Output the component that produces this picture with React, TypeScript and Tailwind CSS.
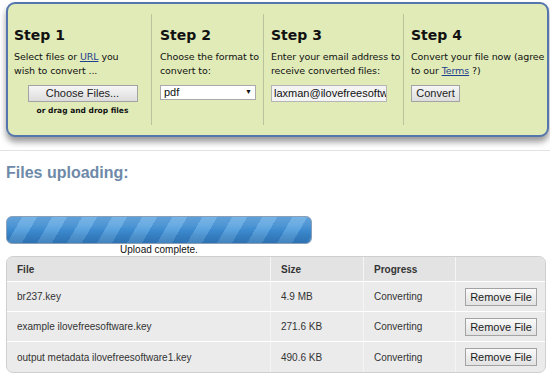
import React from 'react';

function StepDivider() {
  return <div className="w-px self-stretch bg-[#b9c39c] my-[10px]" />;
}

const files = [
  { name: 'br237.key', size: '4.9 MB' },
  { name: 'example ilovefreesoftware.key', size: '271.6 KB' },
  { name: 'output metadata ilovefreesoftware1.key', size: '490.6 KB' },
];

const verdana = { fontFamily: '"DejaVu Sans", Verdana, sans-serif' };
const arial = { fontFamily: '"Liberation Sans", Arial, sans-serif' };

export default function App() {
  return (
    <div className="w-[550px] h-[376px] bg-white overflow-hidden relative" style={arial}>
      {/* Steps panel */}
      <div className="ml-[6px] mt-[2px] w-[543px] h-[135px] bg-[#e0ebb8] border-2 border-[#5576ad] rounded-[9px] shadow-[0_5px_6px_rgba(0,0,0,0.4)] flex text-[#111]">
        <div className="w-[143px] pl-[6px] pt-[22px]" style={verdana}>
          <h2 className="text-[14px] font-bold leading-[18px]">Step 1</h2>
          <p className="mt-[6px] w-[118px] text-[9.5px] leading-[14px] tracking-[-0.1px]">
            Select files or <span className="text-[#1f3f8f] underline">URL</span> you wish to convert ...
          </p>
          <div className="mt-[7px] flex flex-col items-center">
            <button className="w-[110px] h-[17px] border border-[#a3a3a3] bg-gradient-to-b from-[#f6f6f6] to-[#dddddd] text-[11px] leading-[15px] text-[#222]" style={arial}>Choose Files...</button>
            <div className="mt-[3px] text-[7.5px] font-bold">or drag and drop files</div>
          </div>
        </div>
        <StepDivider />
        <div className="w-[111px] pl-[8px] pt-[22px]" style={verdana}>
          <h2 className="text-[14px] font-bold leading-[18px]">Step 2</h2>
          <p className="mt-[6px] text-[9.5px] leading-[14px] tracking-[-0.1px]">Choose the format to convert to:</p>
          <div className="mt-[7px] w-[96px] h-[15px] bg-white border border-[#a9a9a9] flex items-center justify-between px-[3px] text-[11px]" style={arial}>
            <span>pdf</span>
            <span className="text-[7px]">▼</span>
          </div>
        </div>
        <StepDivider />
        <div className="w-[139px] pl-[7px] pt-[22px]" style={verdana}>
          <h2 className="text-[14px] font-bold leading-[18px]">Step 3</h2>
          <p className="mt-[6px] text-[9.5px] leading-[14px] tracking-[-0.1px]">Enter your email address to receive converted files:</p>
          <div className="mt-[7px] w-[116px] h-[17px] bg-[#f4f4f4] border border-[#b5b5b5] overflow-hidden whitespace-nowrap px-[2px] text-[11px] leading-[15px]" style={arial}>laxman@ilovefreesoftware.com</div>
        </div>
        <StepDivider />
        <div className="flex-1 pl-[7px] pt-[22px]" style={verdana}>
          <h2 className="text-[14px] font-bold leading-[18px]">Step 4</h2>
          <p className="mt-[6px] w-[134px] text-[9.5px] leading-[14px] tracking-[-0.1px]">
            Convert your file now (agree to our <span className="text-[#1f3f8f] underline">Terms</span> ?)
          </p>
          <button className="mt-[7px] w-[49px] h-[17px] border border-[#a3a3a3] bg-gradient-to-b from-[#f6f6f6] to-[#dddddd] text-[11px] leading-[15px] text-[#222]" style={arial}>Convert</button>
        </div>
      </div>

      {/* Separator */}
      <div className="mt-[13px] h-px bg-[#e2e2e2]" />

      <h1 className="ml-[6px] mt-[12px] text-[16px] font-bold leading-[20px] text-[#6e8aa8]">Files uploading:</h1>

      {/* Progress */}
      <div className="ml-[6px] mt-[33px] w-[306px]">
        <div className="relative h-[28px] rounded-[6px] border border-[#8aa0b8] overflow-hidden bg-[repeating-linear-gradient(120deg,#3d8bd0_0px,#3d8bd0_13px,#5aa3df_13px,#5aa3df_26px)]">
          <div className="absolute inset-0 bg-[linear-gradient(to_bottom,rgba(255,255,255,0.18)_0%,rgba(255,255,255,0.1)_30%,rgba(255,255,255,0)_50%,rgba(0,40,90,0.12)_70%,rgba(0,40,90,0.25)_100%)]" />
        </div>
        <div className="text-center text-[10px] leading-[12px] text-[#111]">Upload complete.</div>
      </div>

      {/* Table */}
      <div className="ml-[6px] mt-0 w-[540px] rounded-[7px] border border-[#cfcfcf] bg-[#ebebeb] overflow-hidden text-[10px] text-[#333]">
        <div className="flex h-[25px] items-center bg-[#e3e3e3] font-bold border-b border-white">
          <div className="w-[264px] pl-[10px] h-full flex items-center border-r border-[#f5f5f5]">File</div>
          <div className="w-[93px] pl-[10px] h-full flex items-center border-r border-[#f5f5f5]">Size</div>
          <div className="w-[92px] pl-[10px] h-full flex items-center border-r border-[#f5f5f5]">Progress</div>
          <div className="flex-1" />
        </div>
        {files.map((f, i) => (
          <div key={f.name} className={`flex h-[30px] items-center ${i < files.length - 1 ? 'border-b border-white' : ''}`}>
            <div className="w-[264px] pl-[10px] h-full flex items-center border-r border-[#f5f5f5]">{f.name}</div>
            <div className="w-[93px] pl-[10px] h-full flex items-center border-r border-[#f5f5f5]">{f.size}</div>
            <div className="w-[92px] pl-[10px] h-full flex items-center border-r border-[#f5f5f5]">Converting</div>
            <div className="flex-1 flex justify-end pr-[8px]">
              <button className="w-[72px] h-[18px] border border-[#a3a3a3] bg-gradient-to-b from-[#fafafa] to-[#e2e2e2] text-[11px] leading-[16px] text-[#222]">Remove File</button>
            </div>
          </div>
        ))}
      </div>
    </div>
  );
}
